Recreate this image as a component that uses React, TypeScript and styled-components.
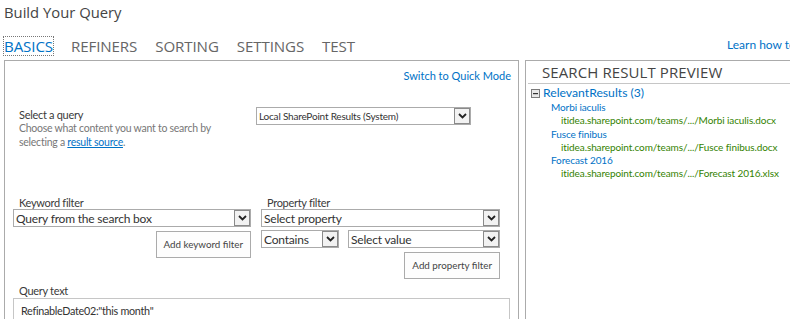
import styled, { createGlobalStyle } from 'styled-components';

const GlobalStyle = createGlobalStyle`
  html, body {
    margin: 0;
    padding: 0;
    background: #fff;
    overflow: hidden;
  }
  body {
    font-family: Lato, "Liberation Sans", sans-serif;
    color: #444;
  }
`;

const Page = styled.div`
  width: 870px;
  padding-left: 4px;
`;

const Title = styled.h1`
  margin: 0;
  padding-top: 1px;
  font-family: "Open Sans", sans-serif;
  font-size: 14.8px;
  font-weight: 400;
  line-height: 22px;
  color: #444;
`;

const TabBar = styled.div`
  display: flex;
  align-items: flex-end;
  height: 35px;
`;

const Tabs = styled.div`
  display: flex;
  gap: 18px;
  flex: 0 0 723px;
  padding-bottom: 3px;
`;

const Tab = styled.span<{ $active?: boolean }>`
  font-family: "Open Sans", sans-serif;
  font-size: 15.1px;
  line-height: 18px;
  letter-spacing: -0.1px;
  color: ${p => (p.$active ? '#0072c6' : '#666')};
  outline: ${p => (p.$active ? '1px dotted #777' : 'none')};
`;

const Learn = styled.a`
  font-size: 12px;
  color: #0072c6;
  text-decoration: none;
  padding-bottom: 6px;
  white-space: nowrap;
`;

const Panels = styled.div`
  display: flex;
  gap: 6px;
  margin-top: 2px;
`;

const LeftPanel = styled.div`
  box-sizing: border-box;
  width: 515px;
  height: 300px;
  border: 1px solid #ababab;
  border-bottom: none;
  padding: 0 7px 0 8px;
`;

const QuickMode = styled.div`
  text-align: right;
  font-size: 11px;
  line-height: 16px;
  padding-top: 7px;
  color: #0072c6;
`;

const QueryRow = styled.div`
  display: flex;
  margin-top: 23px;
  padding-left: 6px;
`;

const QueryInfo = styled.div`
  width: 237px;
  padding-top: 1px;
`;

const Label = styled.div`
  font-size: 11px;
  letter-spacing: -0.3px;
  line-height: 13px;
  color: #3a3a3a;
`;

const Help = styled.div`
  font-size: 10.5px;
  letter-spacing: -0.25px;
  line-height: 14px;
  color: #777;
  a {
    color: #0072c6;
    text-decoration: underline;
  }
`;

const Select = styled.div<{ $w: number; $fs: number }>`
  display: flex;
  align-items: center;
  width: ${p => p.$w}px;
  height: 18px;
  border: 1px solid #ababab;
  box-sizing: border-box;
  background: #fff;
  font-size: ${p => p.$fs}px;
  letter-spacing: -0.2px;
  color: #333;
  span {
    flex: 1;
    padding-left: 2px;
    white-space: nowrap;
    overflow: hidden;
  }
`;

const Arrow = styled.div`
  width: 16px;
  height: 16px;
  box-sizing: border-box;
  border: 1px solid #8a8a8a;
  background: #f2f2f2;
  display: flex;
  align-items: center;
  justify-content: center;
`;

const Filters = styled.div`
  display: flex;
  gap: 10px;
  margin-top: 47px;
`;

const FilterCol = styled.div<{ $w: number }>`
  display: flex;
  flex-direction: column;
  width: ${p => p.$w}px;
  ${Label} {
    padding-left: 6px;
    margin-bottom: 0;
  }
`;

const SelectRow = styled.div`
  display: flex;
  gap: 9px;
  margin-top: 3px;
`;

const Button = styled.div`
  align-self: flex-end;
  margin-top: 4px;
  border: 1px solid #ababab;
  background: #fdfdfd;
  font-size: 9.8px;
  color: #444;
  height: 25px;
  line-height: 25px;
  padding: 0 7px;
  white-space: nowrap;
`;

const QueryLabel = styled(Label)`
  margin-top: 5px;
  padding-left: 6px;
`;

const TextArea = styled.div`
  margin-top: 1px;
  width: 497px;
  height: 40px;
  box-sizing: border-box;
  border: 1px solid #c6c6c6;
  padding: 5px 7px;
  font-size: 10.8px;
  letter-spacing: -0.3px;
  color: #333;
`;

const RightPanel = styled.div`
  box-sizing: border-box;
  width: 340px;
  height: 300px;
  border: 1px solid #ababab;
  border-bottom: none;
`;

const PreviewTitle = styled.div`
  margin: 0 2px;
  padding: 2px 0 2px 14px;
  font-family: "Open Sans", sans-serif;
  font-size: 15px;
  line-height: 18px;
  letter-spacing: 0.1px;
  color: #444;
  border-bottom: 1px solid #c6c6c6;
`;

const Group = styled.div`
  display: flex;
  align-items: center;
  gap: 3px;
  padding: 1px 0 0 5px;
  font-size: 12.2px;
  line-height: 16px;
  color: #0072c6;
`;

const Result = styled.div`
  padding-left: 25px;
  font-size: 10px;
  letter-spacing: -0.1px;
  line-height: 13.3px;
`;

const ResultTitle = styled.div`
  color: #0072c6;
`;

const ResultUrl = styled.div`
  color: #338200;
  padding-left: 10px;
`;

const Chevron = () => (
  <svg width="9" height="6" viewBox="0 0 9 6">
    <path d="M1 1 L4.5 4.5 L8 1" fill="none" stroke="#222" strokeWidth="1.8" />
  </svg>
);

const DropDown = ({ w, text, fs = 12 }: { w: number; text: string; fs?: number }) => (
  <Select $w={w} $fs={fs}>
    <span>{text}</span>
    <Arrow>
      <Chevron />
    </Arrow>
  </Select>
);

const results = [
  { title: 'Morbi iaculis', url: 'itidea.sharepoint.com/teams/.../Morbi iaculis.docx' },
  { title: 'Fusce finibus', url: 'itidea.sharepoint.com/teams/.../Fusce finibus.docx' },
  { title: 'Forecast 2016', url: 'itidea.sharepoint.com/teams/.../Forecast 2016.xlsx' },
];

export default function App() {
  return (
    <>
      <GlobalStyle />
      <Page>
        <Title>Build Your Query</Title>
        <TabBar>
          <Tabs>
            <Tab $active>BASICS</Tab>
            <Tab>REFINERS</Tab>
            <Tab>SORTING</Tab>
            <Tab>SETTINGS</Tab>
            <Tab>TEST</Tab>
          </Tabs>
          <Learn>Learn how to build a query</Learn>
        </TabBar>
        <Panels>
          <LeftPanel>
            <QuickMode>Switch to Quick Mode</QuickMode>
            <QueryRow>
              <QueryInfo>
                <Label>Select a query</Label>
                <Help>
                  Choose what content you want to search by
                  <br />
                  selecting a <a>result source</a>.
                </Help>
              </QueryInfo>
              <DropDown w={215} fs={10} text="Local SharePoint Results (System)" />
            </QueryRow>
            <Filters>
              <FilterCol $w={238}>
                <Label>Keyword filter</Label>
                <DropDown w={238} text="Query from the search box" />
                <Button>Add keyword filter</Button>
              </FilterCol>
              <FilterCol $w={239}>
                <Label>Property filter</Label>
                <DropDown w={239} text="Select property" />
                <SelectRow>
                  <DropDown w={78} text="Contains" />
                  <DropDown w={152} text="Select value" />
                </SelectRow>
                <Button>Add property filter</Button>
              </FilterCol>
            </Filters>
            <QueryLabel>Query text</QueryLabel>
            <TextArea>RefinableDate02:"this month"</TextArea>
          </LeftPanel>
          <RightPanel>
            <PreviewTitle>SEARCH RESULT PREVIEW</PreviewTitle>
            <Group>
              <svg width="9" height="9" viewBox="0 0 9 9">
                <rect x="0.5" y="0.5" width="8" height="8" fill="#e8e8e8" stroke="#7a7a7a" />
                <rect x="2" y="4" width="5" height="1.2" fill="#333" />
              </svg>
              RelevantResults (3)
            </Group>
            {results.map(r => (
              <Result key={r.title}>
                <ResultTitle>{r.title}</ResultTitle>
                <ResultUrl>{r.url}</ResultUrl>
              </Result>
            ))}
          </RightPanel>
        </Panels>
      </Page>
    </>
  );
}
